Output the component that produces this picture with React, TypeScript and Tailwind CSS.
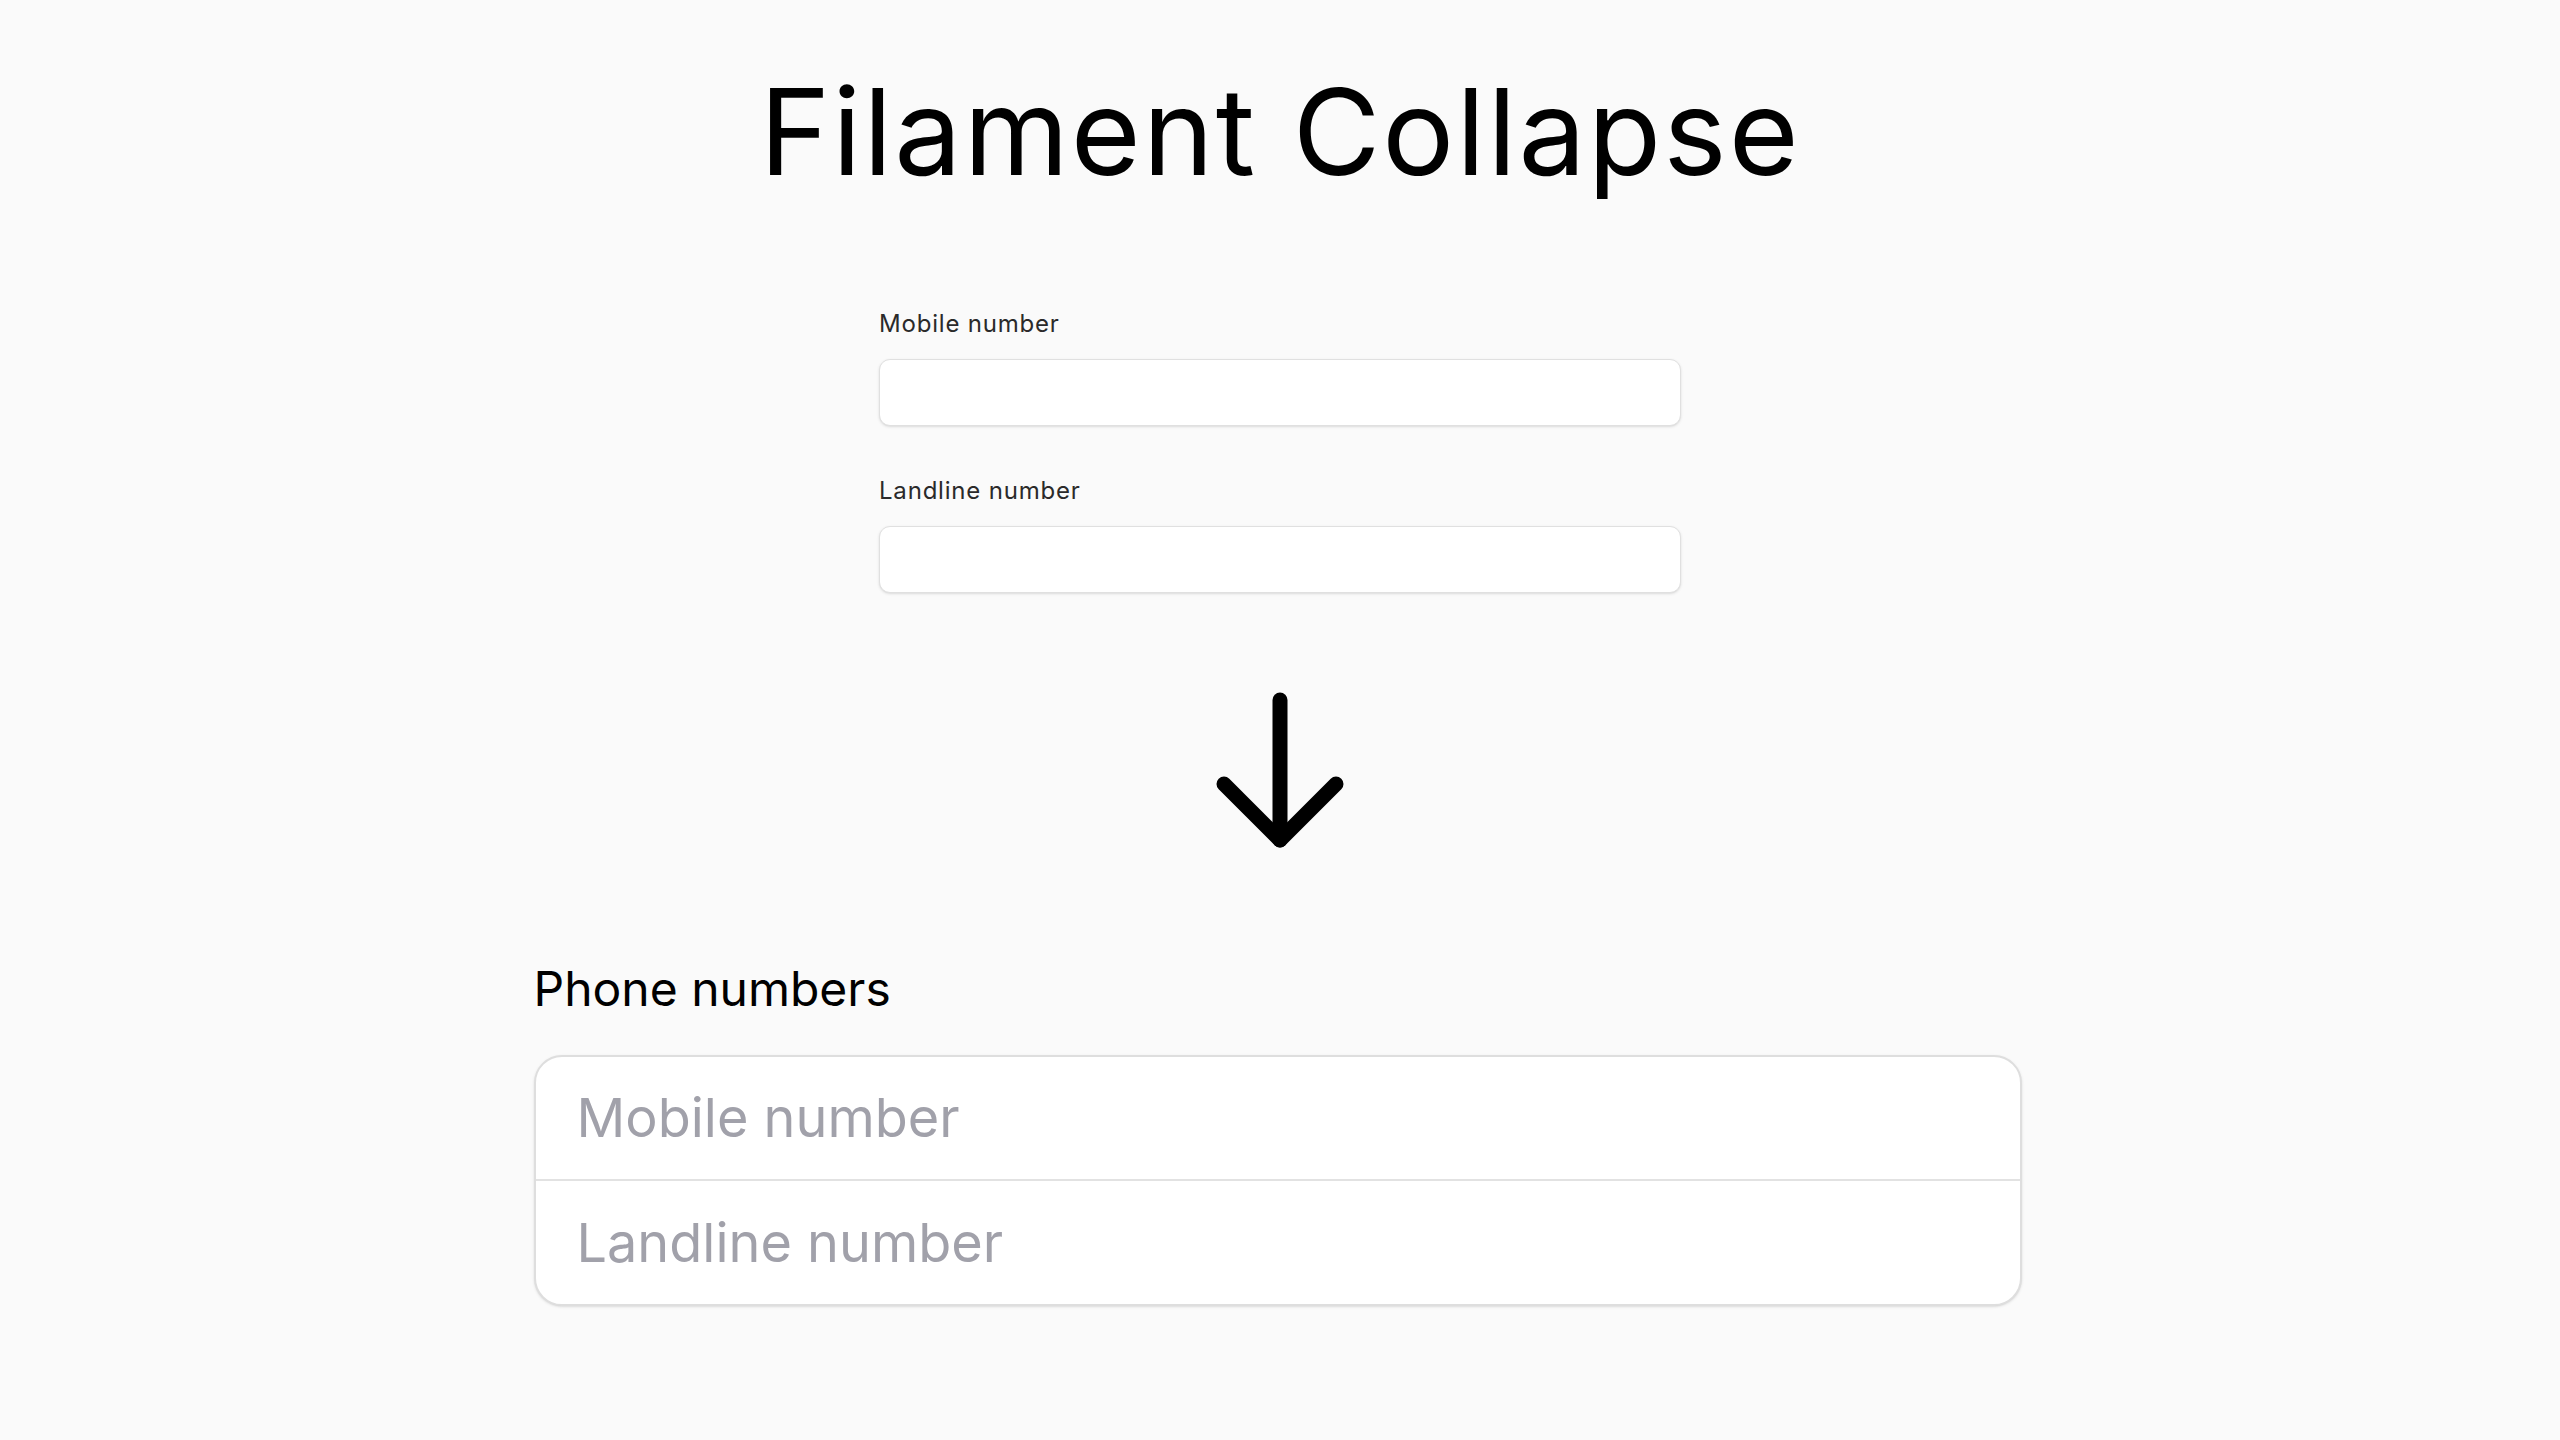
export default function App() {
  return (
    <main className="flex min-h-screen flex-col items-center bg-[#fafafa] font-[Inter,'Noto_Sans',sans-serif] text-black">
      <h1 className="mt-[72px] text-[120px] leading-none font-normal tracking-[2px]">Filament Collapse</h1>

      {/* the original form: two separate fields */}
      <div className="mt-[120px] flex w-[802px] flex-col">
        <label className="text-[24px] leading-none tracking-[0.8px] text-[#2a2a2a]">Mobile number</label>
        <div className="mt-[23px] h-[67px] rounded-[11px] border border-[#e0e0e0] bg-white shadow-sm" />
        <label className="mt-[53px] text-[24px] leading-none tracking-[0.8px] text-[#2a2a2a]">Landline number</label>
        <div className="mt-[23px] h-[67px] rounded-[11px] border border-[#e0e0e0] bg-white shadow-sm" />
      </div>

      <svg
        className="mt-[99px]"
        width="136"
        height="160"
        viewBox="0 0 136 160"
        fill="none"
        stroke="black"
        strokeWidth="15"
        strokeLinecap="round"
        strokeLinejoin="round"
      >
        <path d="M68 8v140" />
        <path d="M12 92l56 56 56-56" />
      </svg>

      {/* collapsed: one grouped field */}
      <div className="mt-[113px] mr-[5px] flex w-[1488px] flex-col">
        <h2 className="text-[48px] leading-none font-normal">Phone numbers</h2>
        <div className="mt-[42px] overflow-hidden rounded-[28px] border-2 border-[#dedede] bg-white shadow-sm">
          <div className="flex h-[122px] items-center px-[41px] text-[54px] leading-none text-[#a1a1aa]">
            Mobile number
          </div>
          <div className="flex h-[125px] items-center border-t-2 border-[#e2e2e2] px-[41px] text-[54px] leading-none text-[#a1a1aa]">
            Landline number
          </div>
        </div>
      </div>
    </main>
  );
}
